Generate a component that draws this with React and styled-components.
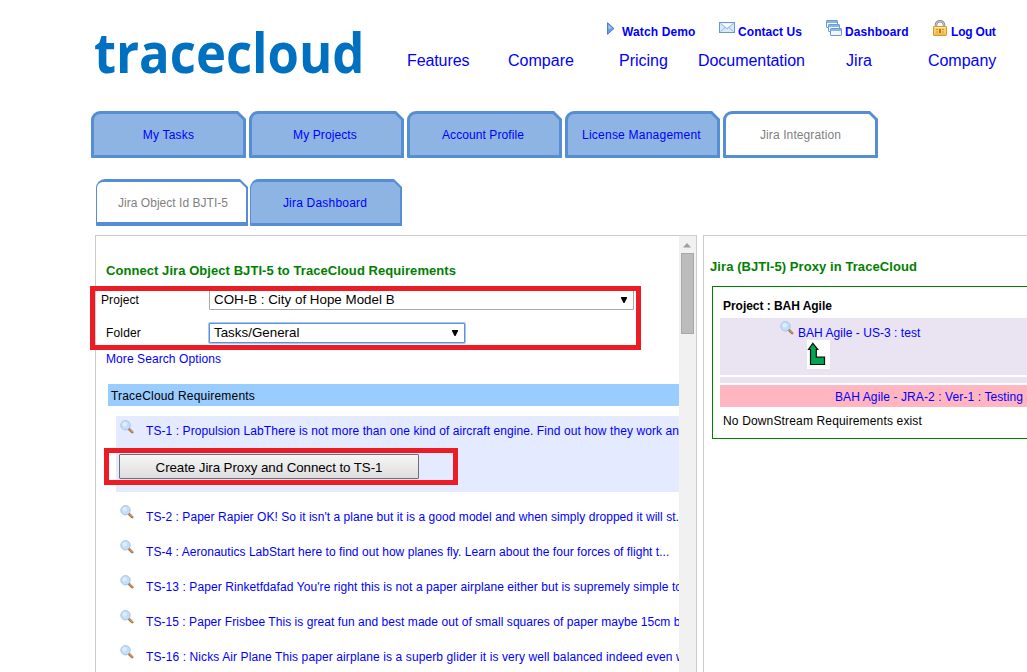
import React from 'react';
import styled, { createGlobalStyle } from 'styled-components';

const GlobalStyle = createGlobalStyle`
  * { box-sizing: border-box; }
  html, body { margin: 0; padding: 0; background: #fff; overflow: hidden; }
  body { font: 12px/14px "Liberation Sans", Arial, sans-serif; color: #000; }
`;

const Page = styled.div`
  position: relative;
  width: 1027px;
  height: 672px;
  overflow: hidden;
`;

const Link = styled.a`
  color: #00f;
  white-space: nowrap;
  text-decoration: none;
  letter-spacing: ${(p) => p.$track || 0}px;
`;

/* ---------- header ---------- */
const Header = styled.header`
  display: flex;
  height: 111px;
  padding-left: 94px;
`;

const Logo = styled.div`
  width: 311px;
  padding-top: 13px;
  font: 700 56px/76px "Open Sans", sans-serif;
  color: #0070c0;
  white-space: nowrap;
  span { display: inline-block; transform: scaleX(0.907); transform-origin: 0 50%; }
`;

const HeaderNav = styled.div`
  flex: 1;
  padding-top: 18px;
`;

const UtilityNav = styled.nav`
  display: flex;
  height: 20px;
  padding-left: 202px;
`;

const UtilityItem = styled.div`
  display: flex;
  width: ${(p) => p.$width}px;
  flex: none;
  gap: ${(p) => p.$gap}px;
  font-weight: bold;
  svg { flex: none; margin-top: ${(p) => p.$iconTop || 0}px; }
  a { margin-top: 7px; }
`;

const MainNav = styled.nav`
  display: flex;
  padding: 14px 0 0 2px;
  font-size: 16px;
  line-height: 18px;
`;

const MainNavItem = styled.div`
  flex: none;
  width: ${(p) => p.$width}px;
`;

/* ---------- tabs ---------- */
const TabRow = styled.div`
  display: flex;
  gap: ${(p) => p.$gap}px;
  margin: ${(p) => p.$margin};
`;

const Tab = styled.div`
  position: relative;
  isolation: isolate;
  display: flex;
  justify-content: center;
  width: ${(p) => p.$width}px;
  height: 47px;
  padding-top: 17px;
  background: #558ed5;
  border-radius: 9px 0 0 1px;
  clip-path: polygon(0 0, calc(100% - 8px) 0, 100% 8px, 100% 100%, 0 100%);
  &::before {
    content: "";
    position: absolute;
    z-index: -1;
    inset: ${(p) => p.$inset || '3px'};
    background: ${(p) => (p.$active ? '#fff' : '#8eb4e3')};
    border-radius: 6px 0 0 0;
    clip-path: polygon(0 0, calc(100% - 6px) 0, 100% 6px, 100% 100%, 0 100%);
  }
  a {
    margin-left: ${(p) => p.$shift || 0}px;
    color: ${(p) => (p.$active ? '#7f7f7f' : '#00f')};
  }
`;

/* ---------- panels ---------- */
const Columns = styled.main`
  display: flex;
  gap: 6px;
  margin: 9px 0 0 95px;
`;

const Panel = styled.section`
  flex: none;
  width: ${(p) => p.$width}px;
  height: 437px;
  border: 1px solid #ccc;
  border-bottom: 0;
  display: flex;
  overflow: hidden;
`;

const PanelBody = styled.div`
  flex: 1;
  min-width: 0;
  overflow: hidden;
  padding-top: ${(p) => p.$top}px;
`;

const Heading = styled.h2`
  margin: 0;
  padding-left: ${(p) => p.$indent}px;
  font-size: 13px;
  line-height: 16px;
  color: #008000;
  white-space: nowrap;
  letter-spacing: ${(p) => p.$track}px;
`;

const Field = styled.div`
  display: flex;
  align-items: center;
  height: 20px;
  margin-top: ${(p) => p.$top}px;
`;

const FieldLabel = styled.label`
  width: 113px;
  padding-left: ${(p) => p.$indent}px;
  letter-spacing: ${(p) => p.$track}px;
`;

const Select = styled.div`
  display: flex;
  justify-content: space-between;
  align-items: center;
  width: ${(p) => p.$width}px;
  height: 20px;
  padding: 0 6px 0 4px;
  background: #fff;
  border: 1px solid ${(p) => (p.$focus ? '#5e8fdd' : '#a9a9a9')};
  box-shadow: ${(p) => (p.$focus ? '0 0 0 1px #a9c6f5' : 'none')};
  border-radius: 1px;
  font-size: 13.33px;
  letter-spacing: 0.02px;
  svg { margin-top: -1px; }
`;

const MoreOptions = styled.div`
  margin: 9px 0 0 10px;
`;

const ListTitle = styled.div`
  height: 22px;
  margin: 18px 0 10px 12px;
  padding: 5px 0 0 3px;
  background: #99ccff;
  letter-spacing: 0.19px;
`;

const Requirement = styled.div`
  display: flex;
  height: 35px;
  padding-left: 24px;
  svg { flex: none; margin: 3px 12px 0 0; }
  a { margin-top: 8px; }
`;

const SelectedRequirement = styled.div`
  height: 76px;
  margin: 0 0 10px 20px;
  background: #e4eaff;
  ${Requirement} { padding-left: 4px; }
  svg { margin-top: 4px; }
`;

const ProxyButton = styled.button`
  display: block;
  width: 300px;
  height: 25px;
  margin: 3px 0 0 3px;
  padding: 3px 0 0;
  border: 1px solid #707070;
  border-radius: 1px;
  background: linear-gradient(#f6f6f6, #dedede);
  font: 13.33px/16px "Liberation Sans", Arial, sans-serif;
  letter-spacing: -0.07px;
  color: #000;
`;

const ScrollBar = styled.div`
  display: flex;
  flex-direction: column;
  align-items: center;
  flex: none;
  width: 17px;
  padding-top: 7px;
  padding-right: 1px;
  background: #f1f1f1;
`;

const ScrollThumb = styled.div`
  width: 13px;
  height: 81px;
  margin-top: 5px;
  border: 1px solid #a8a8a8;
  background: #bcbcbc;
`;

const ProxyCard = styled.div`
  width: 340px;
  height: 153px;
  margin: 11px 0 0 8px;
  padding: 12px 0 0 7px;
  border: 1px solid #008000;
`;

const CardTitle = styled.div`
  padding-left: 3px;
  font-weight: bold;
  letter-spacing: -0.04px;
`;

const Upstream = styled.div`
  height: 57px;
  margin-top: 5px;
  padding: 2px 0 0 60px;
  background: #e9e3f2;
`;

const UpstreamLine = styled.div`
  display: flex;
  gap: 4px;
  height: 20px;
  svg { margin-top: 1px; }
  a { margin-top: 6px; }
`;

const ArrowTile = styled.div`
  width: 23px;
  height: 29px;
  margin-left: 27px;
  background: #fff;
  svg { display: block; }
`;

const Divider = styled.div`
  height: 6px;
  margin: 2px 0;
  background: #e9e3f2;
`;

const ProxyLine = styled.div`
  height: 22px;
  padding: 5px 0 0 115px;
  background: #ffb6c1;
`;

const EmptyNote = styled.div`
  padding: 7px 0 0 3px;
  letter-spacing: 0.154px;
`;

const Highlight = styled.div`
  position: absolute;
  left: ${(p) => p.$x}px;
  top: ${(p) => p.$y}px;
  width: ${(p) => p.$w}px;
  height: ${(p) => p.$h}px;
  border: 5px solid #ed1c24;
  pointer-events: none;
`;

/* ---------- icons ---------- */
const PlayIcon = () => (
  <svg width="8" height="13" viewBox="0 0 8 13">
    <path d="M.5.7 7 6.5.5 12.3z" fill="#6b9edb" stroke="#4d80c6" strokeWidth="1" />
    <path d="M1.5 3v4l3.5-.7z" fill="#a9caf0" />
  </svg>
);

const MailIcon = () => (
  <svg width="16" height="11" viewBox="0 0 16 11">
    <rect x=".5" y=".5" width="15" height="10" fill="#dbeafa" stroke="#6c98d0" />
    <path d="M1.5 1.5 8 6.8l6.5-5.3M1.5 9.5l4.6-4M14.5 9.5l-4.6-4" fill="none" stroke="#8fb4df" />
    <path d="M2.5 1.5h11L8 5.6z" fill="#f7fbff" />
  </svg>
);

const WindowsIcon = () => (
  <svg width="16" height="16" viewBox="0 0 16 16">
    {[[0.5, 0.5], [2.5, 4.5], [4.5, 8.5]].map(([x, y]) => (
      <g key={x}>
        <rect x={x} y={y} width="11" height="7" rx=".5" fill="#f3f8fe" stroke="#6c9ad2" />
        <path d={`M${x + 0.5} ${y + 1.5}h10`} stroke="#8ab4e6" strokeWidth="2" />
      </g>
    ))}
  </svg>
);

const LockIcon = () => (
  <svg width="14" height="16" viewBox="0 0 14 16">
    <path d="M3 8V5a4 3.8 0 0 1 8 0v3" fill="none" stroke="#8b8b8b" strokeWidth="2.6" />
    <path d="M3 8V5a4 3.8 0 0 1 8 0v3" fill="none" stroke="#c9c9c9" strokeWidth="1" />
    <rect x=".5" y="6.5" width="13" height="9" rx=".5" fill="#f9cf62" stroke="#d09a3c" />
    <path d="M1.5 7.5h11" stroke="#fdeaa8" />
    <path d="M1.5 14h11" stroke="#eda935" />
    <path d="M3 9.5h2M3 12h2M9 9.5h2M9 12h2" stroke="#cf9430" />
    <path d="M7 9v4" stroke="#a87a35" strokeWidth="2" />
  </svg>
);

const MagnifierIcon = () => (
  <svg width="14" height="14" viewBox="0 0 14 14">
    <path d="m9 9 3.2 3.2" stroke="#a87848" strokeWidth="2.6" strokeLinecap="round" />
    <path d="m9.8 9.3 2.500 2.500" stroke="#e0ad72" strokeWidth="1" strokeLinecap="round" />
    <circle cx="5.5" cy="5.3" r="4.700" fill="#c3defa" stroke="#a9c4e2" />
    <circle cx="4.7" cy="4.2" r="2.3" fill="#dcedfd" />
  </svg>
);

const UpArrowIcon = () => (
  <svg width="23" height="29" viewBox="0 0 23 29">
    <path d="M5.8 3.3 1.5 9.5h2v15h14v-7.3H9.300V9.500h1.500z" fill="#00a651" stroke="#111" strokeWidth="1.2" />
  </svg>
);

const DropIcon = () => (
  <svg width="6" height="6" viewBox="0 0 6 6">
    <path d="M0 0h6v1L3.5 6h-1L0 1z" />
  </svg>
);

const ScrollUpIcon = () => (
  <svg width="8" height="5" viewBox="0 0 8 5">
    <path d="M4 0 8 4.5H0z" fill="#a0a0a0" />
  </svg>
);

/* ---------- data ---------- */
const mainLinks = [
  ['Features', 101, -0.1], ['Compare', 111, 0.03], ['Pricing', 79, 0], ['Documentation', 148, -0.05],
  ['Jira', 82, 0.05], ['Company', 90, -0.04],
];

const tabs = [
  ['My Tasks', 0.2, 0], ['My Projects', 0.1, -3], ['Account Profile', 0.08, -3], ['License Management', 0.23, -2],
  ['Jira Integration', 0.1, 0],
];

const requirements = [
  ["TS-2 : Paper Rapier OK! So it isn't a plane but it is a good model and when simply dropped it will st.", 0.05],
  ['TS-4 : Aeronautics LabStart here to find out how planes fly. Learn about the four forces of flight t...', 0.045],
  ["TS-13 : Paper Rinketfdafad You're right this is not a paper airplane either but is supremely simple to", 0.08],
  ['TS-15 : Paper Frisbee This is great fun and best made out of small squares of paper maybe 15cm b', 0.053],
  ['TS-16 : Nicks Air Plane This paper airplane is a superb glider it is very well balanced indeed even w', 0.107],
];

export default function App() {
  return (
    <>
      <GlobalStyle />
      <Page>
        <Header>
          <Logo><span>tracecloud</span></Logo>
          <HeaderNav>
            <UtilityNav>
              <UtilityItem $width={112} $gap={7} $iconTop={4}>
                <PlayIcon /><Link $track={0.13}>Watch Demo</Link>
              </UtilityItem>
              <UtilityItem $width={107} $gap={3} $iconTop={4}>
                <MailIcon /><Link $track={0.07}>Contact Us</Link>
              </UtilityItem>
              <UtilityItem $width={107} $gap={3} $iconTop={2}>
                <WindowsIcon /><Link $track={0.12}>Dashboard</Link>
              </UtilityItem>
              <UtilityItem $width={90} $gap={4} $iconTop={2}>
                <LockIcon /><Link $track={-0.2}>Log Out</Link>
              </UtilityItem>
            </UtilityNav>
            <MainNav>
              {mainLinks.map(([label, width, track]) => (
                <MainNavItem key={label} $width={width}><Link $track={track}>{label}</Link></MainNavItem>
              ))}
            </MainNav>
          </HeaderNav>
        </Header>

        <TabRow $gap={3} $margin="0 0 0 91px">
          {tabs.map(([label, track, shift]) => (
            <Tab key={label} $width={155} $active={label === 'Jira Integration'} $shift={shift}>
              <Link $track={track}>{label}</Link>
            </Tab>
          ))}
        </TabRow>
        <TabRow $gap={2} $margin="21px 0 0 96px">
          <Tab $width={152} $active $shift={2} $inset="3px 2px 4px 1px"><Link $track={0.03}>Jira Object Id BJTI-5</Link></Tab>
          <Tab $width={152} $shift={-2} $inset="3px 2px 3px 1px"><Link $track={0.2}>Jira Dashboard</Link></Tab>
        </TabRow>

        <Columns>
          <Panel $width={602}>
            <PanelBody $top={27}>
              <Heading $indent={10} $track={0.061}>Connect Jira Object BJTI-5 to TraceCloud Requirements</Heading>
              <Field $top={11}>
                <FieldLabel $indent={5} $track={0.09}>Project</FieldLabel>
                <Select $width={425}>COH-B : City of Hope Model B<DropIcon /></Select>
              </Field>
              <Field $top={13}>
                <FieldLabel $indent={10} $track={0.16}>Folder</FieldLabel>
                <Select $width={256} $focus>Tasks/General<DropIcon /></Select>
              </Field>
              <MoreOptions><Link $track={0.085}>More Search Options</Link></MoreOptions>
              <ListTitle>TraceCloud Requirements</ListTitle>
              <SelectedRequirement>
                <Requirement>
                  <MagnifierIcon />
                  <Link $track={0.082}>TS-1 : Propulsion LabThere is not more than one kind of aircraft engine. Find out how they work and</Link>
                </Requirement>
                <ProxyButton>Create Jira Proxy and Connect to TS-1</ProxyButton>
              </SelectedRequirement>
              {requirements.map(([text, track]) => (
                <Requirement key={text}>
                  <MagnifierIcon /><Link $track={track}>{text}</Link>
                </Requirement>
              ))}
            </PanelBody>
            <ScrollBar><ScrollUpIcon /><ScrollThumb /></ScrollBar>
          </Panel>

          <Panel $width={360}>
            <PanelBody $top={23}>
              <Heading $indent={6} $track={0.077}>Jira (BJTI-5) Proxy in TraceCloud</Heading>
              <ProxyCard>
                <CardTitle>Project : BAH Agile</CardTitle>
                <Upstream>
                  <UpstreamLine><MagnifierIcon /><Link $track={0.042}>BAH Agile - US-3 : test</Link></UpstreamLine>
                  <ArrowTile><UpArrowIcon /></ArrowTile>
                </Upstream>
                <Divider />
                <ProxyLine><Link $track={0.103}>BAH Agile - JRA-2 : Ver-1 : Testing J</Link></ProxyLine>
                <EmptyNote>No DownStream Requirements exist</EmptyNote>
              </ProxyCard>
            </PanelBody>
          </Panel>
        </Columns>

        <Highlight $x={90} $y={286} $w={551} $h={64} />
        <Highlight $x={104} $y={448} $w={354} $h={37} />
      </Page>
    </>
  );
}
